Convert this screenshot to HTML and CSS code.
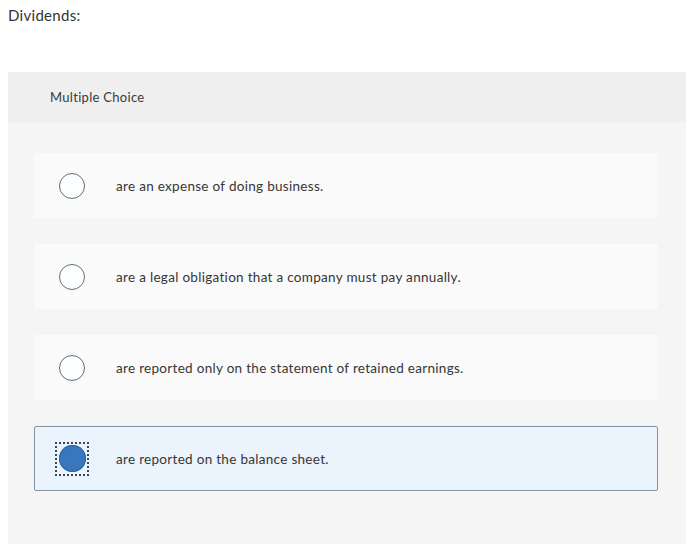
FILE: index.html
```html
<!DOCTYPE html>
<html>
<head>
<meta charset="utf-8">
<link rel="stylesheet" href="styles.css">
</head>
<body>
<p class="question">Dividends:</p>
<div class="panel">
  <div class="panel-head">Multiple Choice</div>
  <div class="options">
    <div class="option"><span class="radio"></span><span class="label">are an expense of doing business.</span></div>
    <div class="option"><span class="radio"></span><span class="label">are a legal obligation that a company must pay annually.</span></div>
    <div class="option"><span class="radio"></span><span class="label">are reported only on the statement of retained earnings.</span></div>
    <div class="option selected"><span class="focus"><span class="radio"></span></span><span class="label">are reported on the balance sheet.</span></div>
  </div>
</div>
</body>
</html>
```
FILE: styles.css
```css
html, body { margin: 0; padding: 0; background: #fff; }
body {
  font-family: Lato, "Open Sans", sans-serif;
  color: #333;
  width: 700px;
  height: 558px;
  overflow: hidden;
  letter-spacing: 0.3px;
}
.question {
  margin: 0;
  padding: 5px 0 0 8px;
  font-size: 15px;
  line-height: 20px;
  color: #333;
}
.panel {
  margin: 47px 14px 0 8px;
  background: #f5f5f5;
  height: 472px;
}
.panel-head {
  background: #efefef;
  height: 50px;
  box-sizing: border-box;
  padding: 17px 0 0 42px;
  font-size: 13px;
  line-height: 16px;
  color: #3a3a3a;
}
.options {
  display: flex;
  flex-direction: column;
  gap: 26px;
  padding: 31px 28px 0 26px;
}
.option {
  display: flex;
  align-items: center;
  height: 65px;
  box-sizing: border-box;
  background: #fafafa;
  padding-left: 25px;
  font-size: 13.5px;
  color: #363636;
}
.radio {
  width: 24px;
  height: 24px;
  border: 1.5px solid #5f6e78;
  border-radius: 50%;
  background: #fdfeff;
  flex: none;
}
.label { margin-left: 31px; }
.selected {
  background: #ebf3fc;
  border: 1px solid #8194a4;
  border-radius: 2px;
  padding-left: 20px;
}
.focus {
  display: flex;
  align-items: center;
  justify-content: center;
  width: 34px;
  height: 34px;
  border: 2px dotted #36475a;
  box-sizing: border-box;
  flex: none;
}
.selected .radio {
  width: 27px;
  height: 27px;
  border: none;
  background: #3a76bd;
  box-shadow: inset 0 0 0 1px #2d65a8;
}
.selected .label { margin-left: 27px; }
```
